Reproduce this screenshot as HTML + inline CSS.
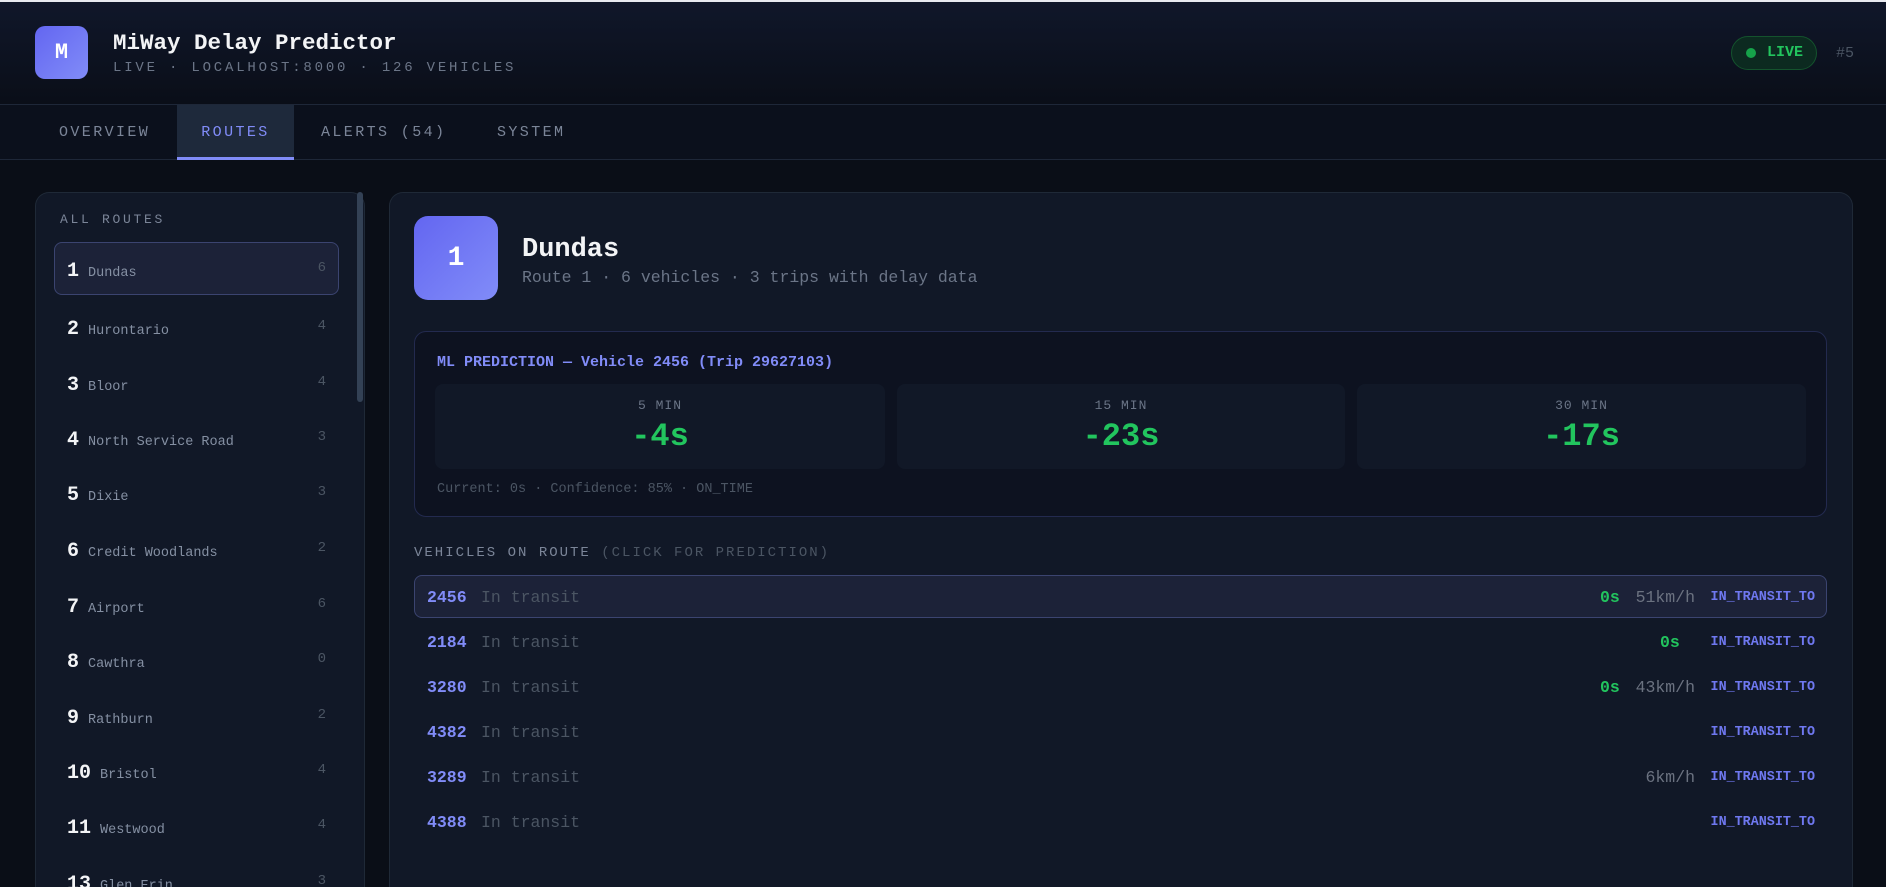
<!DOCTYPE html>
<html><head><meta charset="utf-8"><style>
*{margin:0;padding:0;box-sizing:border-box}
html{width:1886px;height:887px;overflow:hidden}
body{width:1886px;height:887px;overflow:hidden;background:#0a0e17;font-family:"Liberation Mono","DejaVu Sans Mono",monospace;color:#e5e7eb;position:relative}
.a{position:absolute;white-space:nowrap}
.hdr{position:absolute;left:0;top:0;width:1886px;height:105px;background:linear-gradient(#10172a,#0a0e18);border-top:2px solid #e8eaf0;border-bottom:1px solid #1e2738}
.nav{position:absolute;left:0;top:105px;width:1886px;height:55px;background:#0b101c;border-bottom:1px solid #1e2738}
.tab{position:absolute;top:1px;height:54px;line-height:54px;font-size:15px;letter-spacing:2.4px;color:#7b8598}
.panel{position:absolute;background:#111827;border:1px solid #1f2937;border-bottom:none;border-radius:14px 14px 0 0}
.ri{position:absolute;left:54px;width:285px;height:53px}
.ri .n{position:absolute;left:13px;top:18px;font-size:20px;font-weight:bold;color:#f3f4f6}
.ri .t{position:absolute;top:24px;font-size:13.5px;color:#8590a3}
.ri .c{position:absolute;right:13px;top:18px;font-size:14px;color:#4b5563}
.card{position:absolute;top:384px;height:85px;width:450px;background:#111827;border-radius:8px;text-align:center}
.card .l{margin-top:14px;font-size:13px;letter-spacing:1px;color:#6b7587}
.card .v{margin-top:5px;font-size:32px;font-weight:bold;color:#22c55e}
.row{position:absolute;left:414px;width:1413px;height:43px}
.row .id{position:absolute;left:13px;top:13px;font-size:16.5px;font-weight:bold;color:#818cf8}
.row .tx{position:absolute;left:67px;top:13px;font-size:16.5px;color:#4b5563}
.row .st{position:absolute;right:12px;top:15px;font-size:13.4px;font-weight:bold;color:#6f78f0}
.row .sp{position:absolute;right:132px;top:13px;font-size:16.5px;color:#6b7280}
.row .dl{position:absolute;top:13px;font-size:16.5px;font-weight:bold;color:#22c55e}
</style></head><body>
<div class="hdr"></div>
<div class="a" style="left:35px;top:26px;width:53px;height:53px;border-radius:10px;background:linear-gradient(135deg,#6366f1,#818cf8);text-align:center;line-height:53px;font-size:22px;font-weight:bold;color:#fff">M</div>
<div class="a" style="left:113px;top:30px;font-size:22.5px;font-weight:bold;color:#f3f4f6">MiWay Delay Predictor</div>
<div class="a" style="left:113px;top:60px;font-size:14px;letter-spacing:2.8px;color:#6b7587">LIVE · LOCALHOST:8000 · 126 VEHICLES</div>
<div class="a" style="left:1731px;top:36px;width:86px;height:34px;border-radius:17px;background:#0c2a20;border:1px solid #14532d;color:#22c55e;font-size:15px;font-weight:bold;line-height:32px;padding-left:35px">LIVE</div>
<div class="a" style="left:1746px;top:48px;width:10px;height:10px;border-radius:50%;background:#16a34a"></div>
<div class="a" style="left:1836px;top:45px;font-size:15px;color:#4b5563">#5</div>

<div class="nav">
<div class="tab" style="left:59px">OVERVIEW</div>
<div class="tab" style="left:177px;top:0;width:117px;background:#1e293b;color:#818cf8;text-align:center;border-bottom:3px solid #818cf8;height:55px;line-height:56px">ROUTES</div>
<div class="tab" style="left:321px">ALERTS (54)</div>
<div class="tab" style="left:497px">SYSTEM</div>
</div>

<div class="panel" style="left:35px;top:192px;width:330px;height:695px"></div>
<div class="a" style="left:357px;top:192px;width:6px;height:210px;border-radius:3px;background:#334155"></div>
<div class="a" style="left:60px;top:212px;font-size:13px;letter-spacing:2.7px;color:#7b8598">ALL ROUTES</div>

<div class="ri" style="top:242px;background:#1c2238;border:1px solid #3b4470;border-radius:8px"><span class="n" style="left:12px;top:17px">1</span><span class="t" style="left:33px;top:23px">Dundas</span><span class="c" style="right:12px;top:17px">6</span></div>
<div class="ri" style="top:300px"><span class="n">2</span><span class="t" style="left:34px">Hurontario</span><span class="c">4</span></div>
<div class="ri" style="top:356px"><span class="n">3</span><span class="t" style="left:34px">Bloor</span><span class="c">4</span></div>
<div class="ri" style="top:411px"><span class="n">4</span><span class="t" style="left:34px">North Service Road</span><span class="c">3</span></div>
<div class="ri" style="top:466px"><span class="n">5</span><span class="t" style="left:34px">Dixie</span><span class="c">3</span></div>
<div class="ri" style="top:522px"><span class="n">6</span><span class="t" style="left:34px">Credit Woodlands</span><span class="c">2</span></div>
<div class="ri" style="top:578px"><span class="n">7</span><span class="t" style="left:34px">Airport</span><span class="c">6</span></div>
<div class="ri" style="top:633px"><span class="n">8</span><span class="t" style="left:34px">Cawthra</span><span class="c">0</span></div>
<div class="ri" style="top:689px"><span class="n">9</span><span class="t" style="left:34px">Rathburn</span><span class="c">2</span></div>
<div class="ri" style="top:744px"><span class="n">10</span><span class="t" style="left:46px">Bristol</span><span class="c">4</span></div>
<div class="ri" style="top:799px"><span class="n">11</span><span class="t" style="left:46px">Westwood</span><span class="c">4</span></div>
<div class="ri" style="top:855px"><span class="n">13</span><span class="t" style="left:46px">Glen Erin</span><span class="c">3</span></div>

<div class="panel" style="left:389px;top:192px;width:1464px;height:695px"></div>
<div class="a" style="left:414px;top:216px;width:84px;height:84px;border-radius:14px;background:linear-gradient(135deg,#6366f1,#818cf8);text-align:center;line-height:86px;font-size:28px;font-weight:bold;color:#fff">1</div>
<div class="a" style="left:522px;top:235px;font-size:27px;font-weight:bold;color:#f3f4f6">Dundas</div>
<div class="a" style="left:522px;top:268px;font-size:16.5px;color:#6b7587">Route 1 · 6 vehicles · 3 trips with delay data</div>

<div class="a" style="left:414px;top:331px;width:1413px;height:186px;background:#0d1220;border:1px solid #232a4f;border-radius:12px"></div>
<div class="a" style="left:437px;top:354px;font-size:15px;font-weight:bold;color:#818cf8">ML PREDICTION — Vehicle 2456 (Trip 29627103)</div>
<div class="card" style="left:435px"><div class="l">5 MIN</div><div class="v">-4s</div></div>
<div class="card" style="left:897px;width:448px"><div class="l">15 MIN</div><div class="v">-23s</div></div>
<div class="card" style="left:1357px;width:449px"><div class="l">30 MIN</div><div class="v">-17s</div></div>
<div class="a" style="left:437px;top:482px;font-size:13.5px;color:#4b5563">Current: 0s · Confidence: 85% · ON_TIME</div>

<div class="a" style="left:414px;top:545px;font-size:14px;letter-spacing:2px;color:#7b8598">VEHICLES ON ROUTE <span style="color:#4b5563">(CLICK FOR PREDICTION)</span></div>

<div class="row" style="top:575px;background:#1c2238;border:1px solid #3b4470;border-radius:8px"><span class="id" style="left:12px;top:12px">2456</span><span class="tx" style="left:66px;top:12px">In transit</span><span class="dl" style="left:1185px;top:12px">0s</span><span class="sp" style="right:131px;top:12px">51km/h</span><span class="st" style="right:11px;top:14px">IN_TRANSIT_TO</span></div>
<div class="row" style="top:620px"><span class="id">2184</span><span class="tx">In transit</span><span class="dl" style="left:1246px">0s</span><span class="st">IN_TRANSIT_TO</span></div>
<div class="row" style="top:665px"><span class="id">3280</span><span class="tx">In transit</span><span class="dl" style="left:1186px">0s</span><span class="sp">43km/h</span><span class="st">IN_TRANSIT_TO</span></div>
<div class="row" style="top:710px"><span class="id">4382</span><span class="tx">In transit</span><span class="st">IN_TRANSIT_TO</span></div>
<div class="row" style="top:755px"><span class="id">3289</span><span class="tx">In transit</span><span class="sp">6km/h</span><span class="st">IN_TRANSIT_TO</span></div>
<div class="row" style="top:800px"><span class="id">4388</span><span class="tx">In transit</span><span class="st">IN_TRANSIT_TO</span></div>
</body></html>
